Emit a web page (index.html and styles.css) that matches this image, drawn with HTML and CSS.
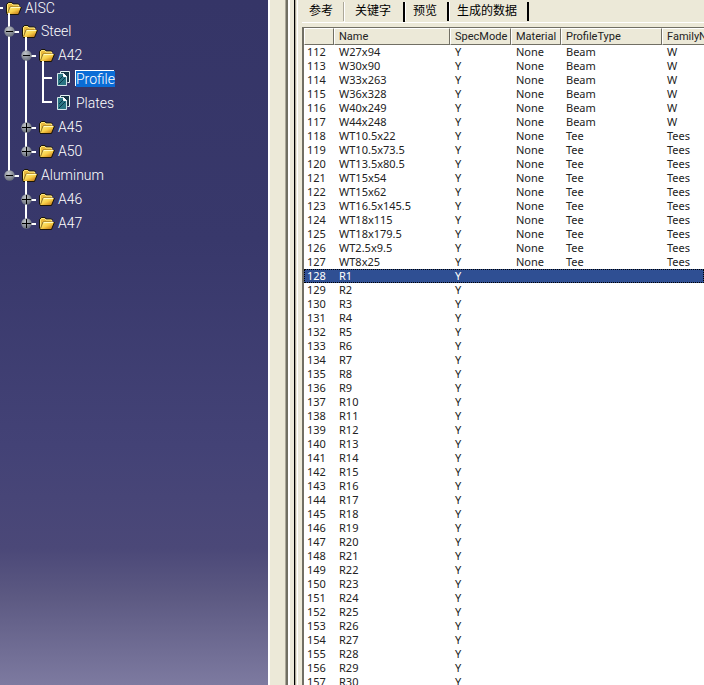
FILE: index.html
```html
<!DOCTYPE html>
<html lang="zh-CN">
<head>
<meta charset="utf-8">
<title>AISC</title>
<link rel="stylesheet" href="styles.css">
</head>
<body>
<svg class="defs" aria-hidden="true">
  <defs>
    <linearGradient id="gold" x1="0" y1="0" x2="1" y2="1">
      <stop offset="0" stop-color="#fff58a"/>
      <stop offset=".5" stop-color="#f8cf48"/>
      <stop offset="1" stop-color="#b8640c"/>
    </linearGradient>
    <radialGradient id="steel" cx=".4" cy=".3" r=".8">
      <stop offset="0" stop-color="#c0c4c8"/>
      <stop offset="1" stop-color="#5c6270"/>
    </radialGradient>
    <symbol id="folder" viewBox="0 0 16 13">
      <path d="M1 11V2.500L2.500 1H5.500L7 2.500H12.500L13.500 4V5.500L11 11Z" fill="#e9b93c"/>
      <path d="M.5 11.500V2.500L2.500.5H6L7.500 2H12.500L13.500 3" fill="none" stroke="#1c1606"/>
      <path d="M1.500 10.500V3L2.500 1.500H5.500L7 3H12.500V4.500" fill="none" stroke="#ffe97c"/>
      <path d="M1 12L4 5H15.500L12.500 12Z" fill="url(#gold)"/>
      <path d="M1.500 11.500L4 5H13" fill="none" stroke="#4a3408" stroke-width=".6"/>
      <path d="M4.500 5.500H14" stroke="#fffbc0"/>
      <path d="M1 12.500H12.500L15.500 5" fill="none" stroke="#1c1606"/>
    </symbol>
    <symbol id="sheet" viewBox="0 0 13 15">
      <path d="M3.500 2.500V.5H12.500V11.500H10.500" fill="#173646" stroke="#e8f4f4"/>
      <path d="M.5 2.500H6.500L9.500 5.500V14.500H.5Z" fill="#2a7482" stroke="#d4e6e8"/>
      <path d="M6.500 2.500V5.500H9.500Z" fill="#fff" stroke="#fff"/>
      <path d="M2 13L8 7M2 9l4-4" stroke="#0c3448"/>
    </symbol>
    <symbol id="minus" viewBox="0 0 11 11">
      <circle cx="5.500" cy="5.500" r="5.200" fill="url(#steel)"/>
      <path d="M2 5.500h7" stroke="#000"/>
    </symbol>
    <symbol id="plus" viewBox="0 0 11 11">
      <circle cx="5.500" cy="5.500" r="5.200" fill="url(#steel)"/>
      <path d="M1 5.500h9M5.500 1v9" stroke="#000"/>
    </symbol>
  </defs>
</svg>
<div class="app">
  <nav class="tree" aria-label="AISC">
    <div class="node root"><svg class="folder"><use href="#folder"/></svg><span>AISC</span></div>
    <ul class="branch">
      <li>
        <div class="node"><button class="knob" aria-label="Steel"><svg><use href="#minus"/></svg></button><svg class="folder"><use href="#folder"/></svg><span>Steel</span></div>
        <ul class="branch">
          <li>
            <div class="node"><button class="knob" aria-label="A42"><svg><use href="#minus"/></svg></button><svg class="folder"><use href="#folder"/></svg><span>A42</span></div>
            <ul class="branch leaves">
              <li><div class="node"><svg class="sheet"><use href="#sheet"/></svg><span class="picked">Profile</span></div></li>
              <li><div class="node"><svg class="sheet"><use href="#sheet"/></svg><span>Plates</span></div></li>
            </ul>
          </li>
          <li><div class="node"><button class="knob" aria-label="A45"><svg><use href="#plus"/></svg></button><svg class="folder"><use href="#folder"/></svg><span>A45</span></div></li>
          <li><div class="node"><button class="knob" aria-label="A50"><svg><use href="#plus"/></svg></button><svg class="folder"><use href="#folder"/></svg><span>A50</span></div></li>
        </ul>
      </li>
      <li>
        <div class="node"><button class="knob" aria-label="Aluminum"><svg><use href="#minus"/></svg></button><svg class="folder"><use href="#folder"/></svg><span>Aluminum</span></div>
        <ul class="branch">
          <li><div class="node"><button class="knob" aria-label="A46"><svg><use href="#plus"/></svg></button><svg class="folder"><use href="#folder"/></svg><span>A46</span></div></li>
          <li><div class="node"><button class="knob" aria-label="A47"><svg><use href="#plus"/></svg></button><svg class="folder"><use href="#folder"/></svg><span>A47</span></div></li>
        </ul>
      </li>
    </ul>
  </nav>
  <div class="splitter"></div>
  <main class="panel">
    <div class="tabs" role="tablist">
      <button class="tab" role="tab">参考</button>
      <button class="tab active" role="tab" aria-selected="true">关键字</button>
      <button class="tab" role="tab">预览</button>
      <button class="tab" role="tab">生成的数据</button>
    </div>
    <div class="sheetbox">
      <table>
        <colgroup><col class="c-num"><col class="c-name"><col class="c-spec"><col class="c-mat"><col class="c-type"><col class="c-fam"></colgroup>
        <thead><tr><th></th><th>Name</th><th>SpecMode</th><th>Material</th><th>ProfileType</th><th>FamilyName</th></tr></thead>
        <tbody id="rows"></tbody>
      </table>
    </div>
  </main>
</div>
<script src="rows.js"></script>
</body>
</html>
```
FILE: styles.css
```css
* { box-sizing: border-box; }

body {
  margin: 0;
  overflow: hidden;
  background: #ece9d8;
  font-family: "Noto Sans", "Noto Sans CJK SC", sans-serif;
}

button {
  margin: 0;
  padding: 0;
  border: 0;
  background: none;
  font: inherit;
  color: inherit;
}

.defs { position: absolute; width: 0; height: 0; }

.app { display: flex; height: 100vh; }

/* Tree */
.tree {
  flex: 0 0 268px;
  padding-left: 4px;
  overflow: hidden;
  background: linear-gradient(#353567 0%, #38386b 35%, #434276 65%, #4b4878 80%, #5c5982 87%, #7d7aa0 100%);
  color: #fff;
  font-family: Roboto, sans-serif;
  font-size: 14px;
  font-weight: 300;
  line-height: 16px;
}

.branch { margin: 0; padding: 0; list-style: none; }
.branch .branch { margin-left: 17px; }
.branch li { position: relative; }

.node { display: flex; align-items: center; height: 24px; }
.root {
  height: 19px;
  margin-left: -4px;
  padding: 0 0 3px 6px;
  background: linear-gradient(#fff, #fff) 0 7px / 3px 2px no-repeat;
}

.folder { width: 16px; height: 13px; margin-right: 3px; }
.sheet { width: 13px; height: 15px; margin: 0 6px 2px 19px; }

.knob { position: relative; z-index: 1; width: 18px; height: 11px; background: linear-gradient(#fff, #fff) 9px 5px / 6px 2px no-repeat; }
.knob svg { display: block; width: 11px; height: 11px; }

/* Connector lines */
.branch li::before {
  content: "";
  position: absolute;
  left: 4px;
  top: -6px;
  bottom: 0;
  width: 2px;
  background: #fff;
}
.branch li:last-child::before { bottom: auto; height: 18px; }
.leaves li::after {
  content: "";
  position: absolute;
  left: 4px;
  top: 10px;
  width: 10px;
  height: 2px;
  background: #fff;
}

.picked { background: #0a6cd6; box-shadow: -1px -1px 0 #fff; }

/* Divider between the two panes */
.splitter {
  flex: 0 0 34px;
  background: linear-gradient(90deg, #fff 0 2px, #ece9d8 2px 17px, #aca899 17px 18px, #716f64 18px 20px, #fff 20px 22px, #ece9d8 22px 26px, #000 26px 27px, #aca899 27px 28px, #ece9d8 28px 29px, #fff 29px 30px, #ece9d8 30px);
}

/* Tabs and table */
.panel { display: flex; flex: 1; flex-direction: column; min-width: 0; }

.tabs { display: flex; height: 23px; padding-top: 2px; border-bottom: 1px solid #fff; font-size: 12px; line-height: 16px; }
.tab { height: 19px; padding: 0 10px 2px 7px; border-right: 2px solid #000; border-left: 1px solid #fff; }
.tab:first-child { border-right: 1px solid #aca899; border-left: 0; }
.tab.active { height: 20px; padding: 0 12px 2px 10px; }

.sheetbox { flex: 1; min-height: 0; margin-top: 4px; overflow: hidden; border: solid #716f64; border-width: 1px 0 0 2px; background: #fff; }

table { width: 100%; border-collapse: separate; border-spacing: 0; table-layout: fixed; font-size: 11px; line-height: 14px; color: #222; }
.c-num { width: 30px; }
.c-name { width: 116px; }
.c-spec { width: 61px; }
.c-mat { width: 50px; }
.c-type { width: 101px; }

th, td { padding: 0 0 0 5px; overflow: hidden; font-weight: normal; text-align: left; white-space: nowrap; }
th { height: 17px; padding-left: 4px; border: 1px solid; border-color: #fff #716f64 #716f64 #fff; background: #ece9d8; font-family: Roboto, sans-serif; }
th:last-child { border-right: 0; }
td { height: 14px; }
td:first-child { padding-left: 3px; }
tr.selected td { background: #2f4f93; color: #fff; }
tr.selected { outline: 1px dotted #000; outline-offset: -1px; }
```
FILE: rows.js
```js
const profiles = [
  ["W27x94", "Beam", "W"], ["W30x90", "Beam", "W"], ["W33x263", "Beam", "W"],
  ["W36x328", "Beam", "W"], ["W40x249", "Beam", "W"], ["W44x248", "Beam", "W"],
  ["WT10.5x22", "Tee", "Tees"], ["WT10.5x73.5", "Tee", "Tees"], ["WT13.5x80.5", "Tee", "Tees"],
  ["WT15x54", "Tee", "Tees"], ["WT15x62", "Tee", "Tees"], ["WT16.5x145.5", "Tee", "Tees"],
  ["WT18x115", "Tee", "Tees"], ["WT18x179.5", "Tee", "Tees"], ["WT2.5x9.5", "Tee", "Tees"],
  ["WT8x25", "Tee", "Tees"]
];
const body = document.getElementById("rows");
for (let number = 112; number <= 157; number++) {
  const profile = profiles[number - 112];
  const cells = profile
    ? [number, profile[0], "Y", "None", profile[1], profile[2]]
    : [number, "R" + (number - 127), "Y", "", "", ""];
  const row = body.insertRow();
  if (number === 128) row.className = "selected";
  for (const text of cells) row.insertCell().textContent = text;
}
```
